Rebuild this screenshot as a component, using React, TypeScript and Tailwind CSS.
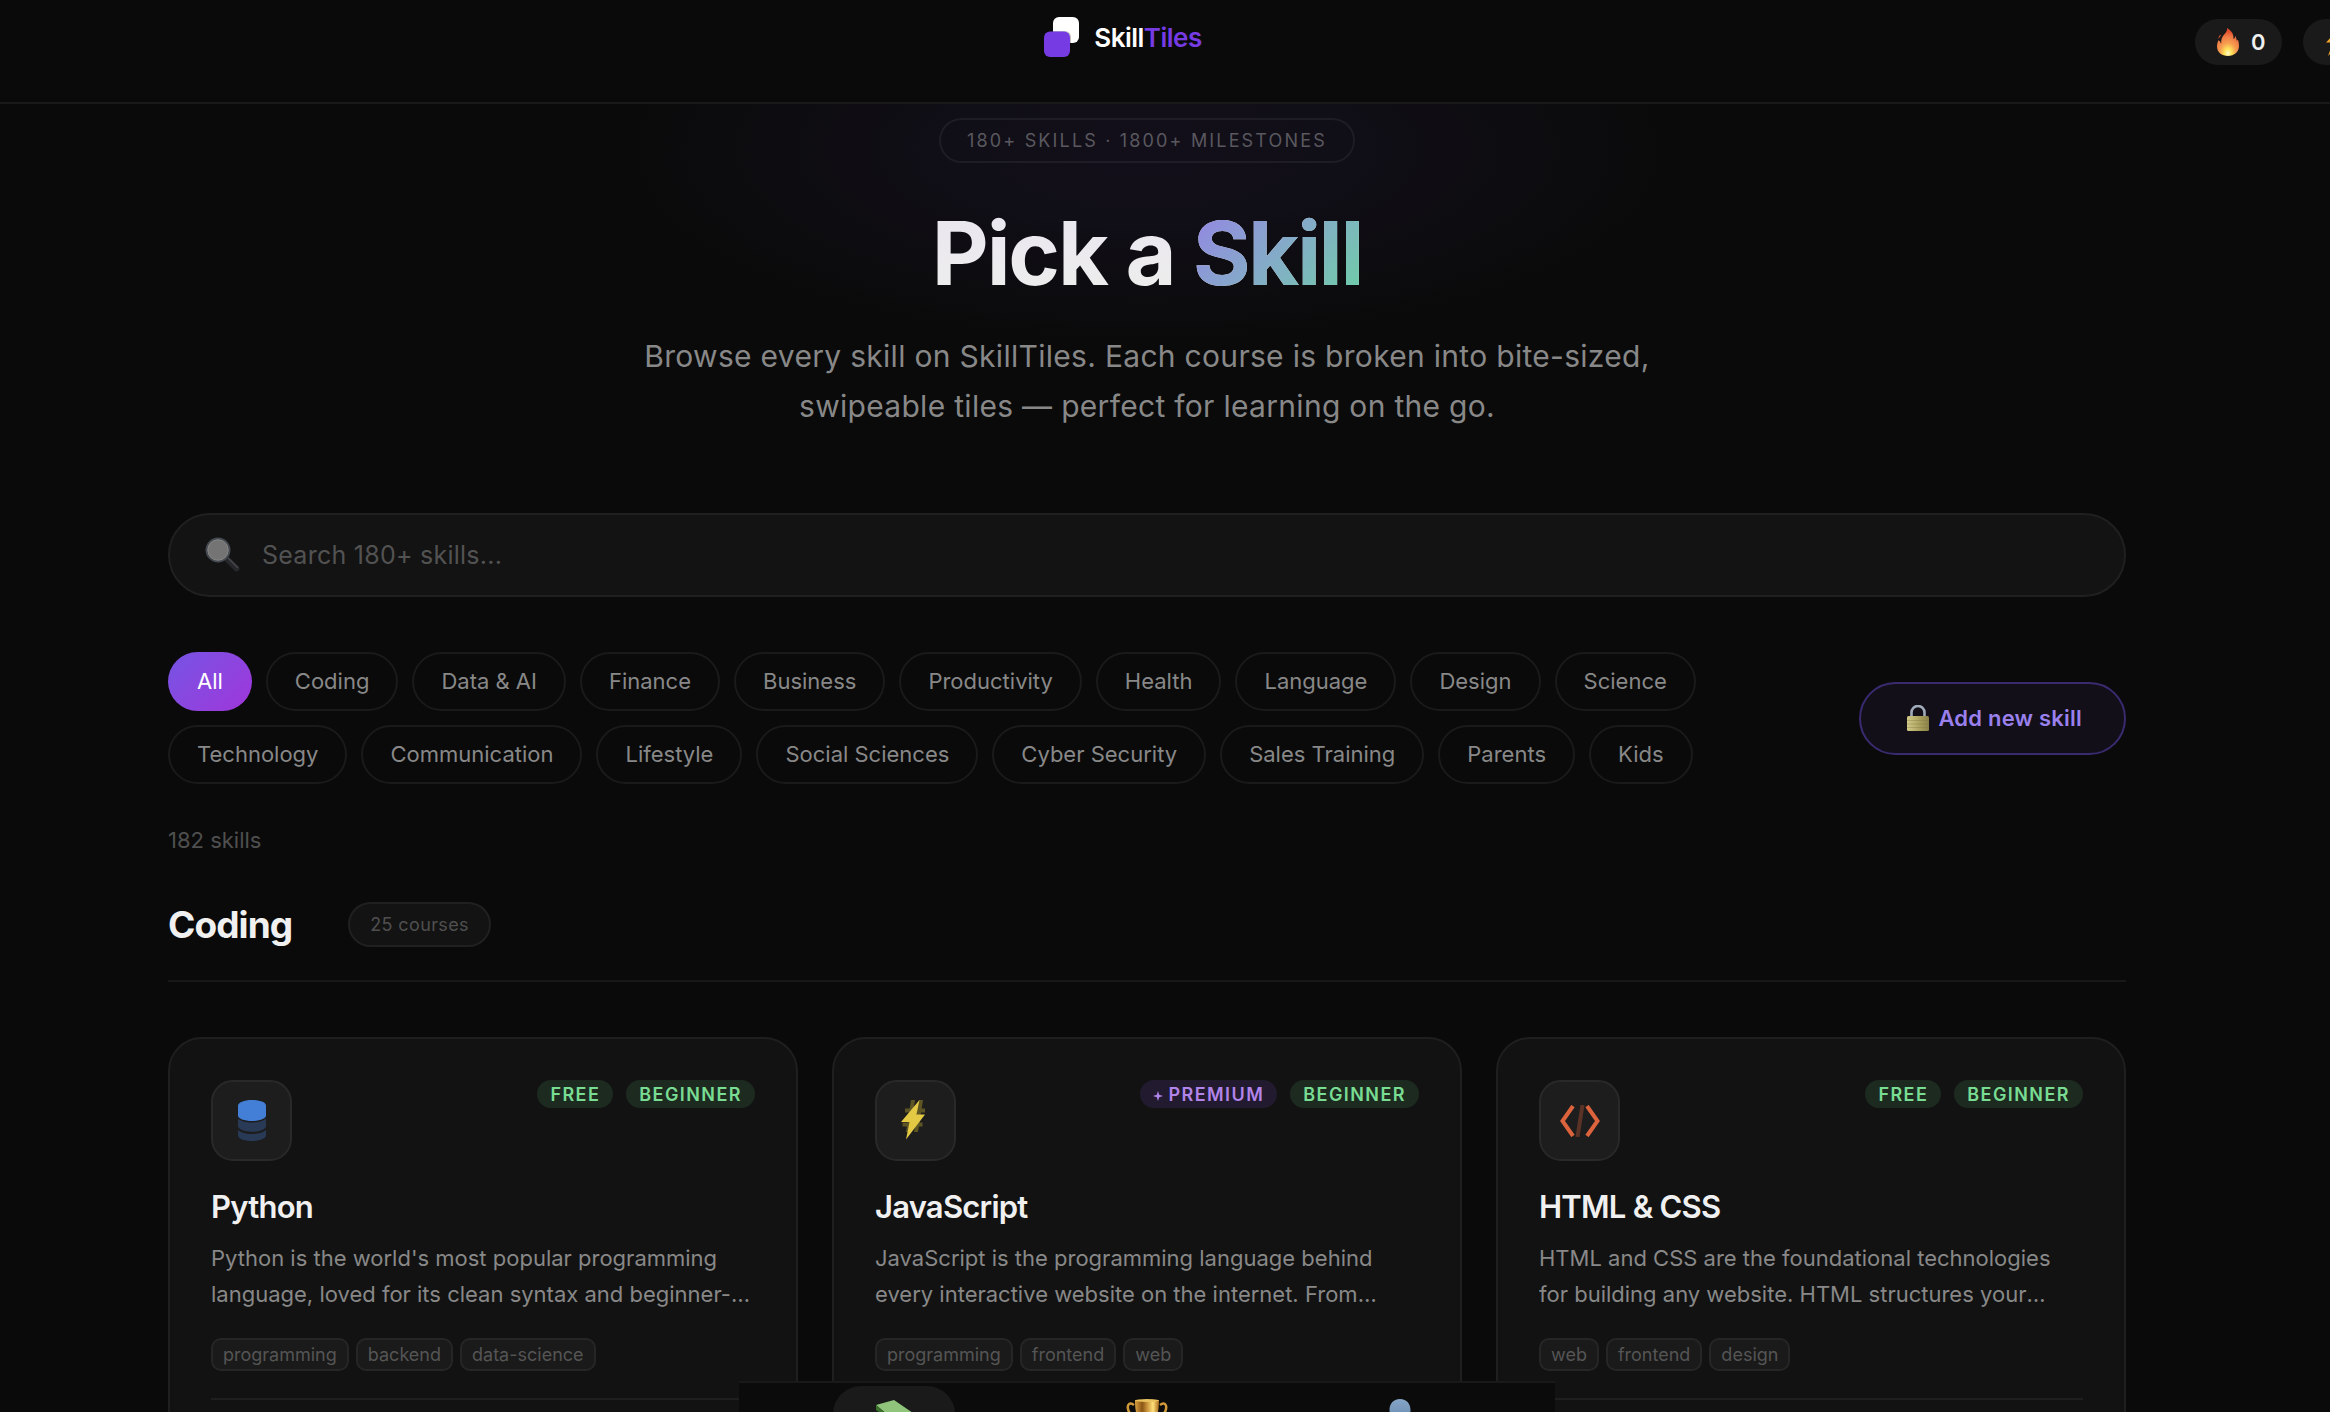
import React from "react";

const categories = [
  "All", "Coding", "Data & AI", "Finance", "Business", "Productivity", "Health", "Language", "Design", "Science",
  "Technology", "Communication", "Lifestyle", "Social Sciences", "Cyber Security", "Sales Training", "Parents", "Kids",
];

function Logo() {
  return (
    <svg width="36" height="40" viewBox="0 0 36 40" aria-hidden="true">
      <rect x="9" y="0" width="26" height="26" rx="6" fill="#fff" />
      <rect x="0" y="14" width="27" height="26" rx="6" fill="#0a0a0a" opacity=".25" />
      <rect x="0" y="14.5" width="26" height="25.5" rx="6" fill="#763be3" />
    </svg>
  );
}

function Flame() {
  return (
    <svg width="22" height="28" viewBox="0 0 22 28" aria-hidden="true">
      <defs>
        <radialGradient id="flame" cx=".5" cy=".9" r=".8">
          <stop offset="0" stopColor="#fffbd0" />
          <stop offset=".2" stopColor="#ffe35a" />
          <stop offset=".45" stopColor="#f7a050" />
          <stop offset=".75" stopColor="#ee7a45" />
          <stop offset="1" stopColor="#dd4a2c" />
        </radialGradient>
      </defs>
      <path d="M10.200 0c4.800 3.300 6.800 6.600 6.200 11 1.300-.6 1.900-1.700 1.900-3.300.9 1.800 1.300 3.300 1.400 5 .5-.2.900-.5 1.300-.9.7 2 1 4 1 6C22 24 17.200 28 11 28S0 24.200 0 18.500c0-2.600.6-4.600 1.600-6.500.4.8.9 1.300 1.600 1.600.1 1 .4 1.700 1 2.200C3.900 11.500 5 8.700 7.600 6 9.200 4.300 10.200 2.400 10.200 0z" fill="url(#flame)" />
      <path d="M3.600 6.500C2 7.800 1.300 9.400 1.700 11c.5-1.500 1.400-2.400 2-3z" fill="#e2552f" />
    </svg>
  );
}

function Bolt() {
  return (
    <svg width="22" height="28" viewBox="0 0 22 28" aria-hidden="true">
      <path d="M15 0 1 14.500h7L3 28l17-16.500h-8z" fill="#f3a32c" />
    </svg>
  );
}

function Magnifier() {
  return (
    <svg width="36" height="36" viewBox="0 0 36 36" aria-hidden="true">
      <path d="m22.500 22.500 9 9" stroke="#25272a" strokeWidth="6" strokeLinecap="round" />
      <path d="m23.500 21.500 9 9" stroke="#4a4c52" strokeWidth="1.200" strokeLinecap="round" />
      <circle cx="13" cy="13" r="11.500" fill="#747474" stroke="#454a50" strokeWidth="2" />
      <circle cx="13" cy="13" r="10.200" fill="none" stroke="#8a8a8a" strokeWidth=".8" />
    </svg>
  );
}

function Lock() {
  return (
    <svg width="22" height="26" viewBox="0 0 22 26" aria-hidden="true">
      <defs>
        <linearGradient id="lock" x1="0" x2="1">
          <stop offset="0" stopColor="#d3cb88" />
          <stop offset=".6" stopColor="#a89f5c" />
          <stop offset="1" stopColor="#8a8148" />
        </linearGradient>
      </defs>
      <path d="M4.500 12V7.500a6.500 6.500 0 0 1 13 0V12" fill="none" stroke="#9fabb9" strokeWidth="2.600" />
      <rect x="0" y="11" width="22" height="15" rx="1.500" fill="url(#lock)" />
      <path d="M0 15.500h22M0 19h22M0 22.500h22" stroke="#7d7644" strokeWidth=".6" opacity=".6" />
    </svg>
  );
}

function DatabaseIcon() {
  return (
    <svg width="30" height="42" viewBox="0 0 30 42" aria-hidden="true">
      <path d="M1 5.500C1 2.500 7 0 15 0s14 2.500 14 5.500v10C29 18.500 23 21 15 21S1 18.500 1 15.500z" fill="#437fd6" />
      <path d="M1 18.500c2.500 2.500 8 4 14 4s11.500-1.500 14-4V26c0 3-6 5.700-14 5.700S1 29 1 26z" fill="#293a57" />
      <path d="M1 30c2.500 2.500 8 4 14 4s11.500-1.500 14-4v5.500c0 3-6 5.500-14 5.500S1 38.500 1 35.500z" fill="#293a57" />
    </svg>
  );
}

function LightningIcon() {
  return (
    <svg width="30" height="42" viewBox="0 0 30 42" aria-hidden="true">
      <path d="M10 0h4l-5 32H5zM18 0h4l-5 32h-4zM4 8.500h20v4H4zM1.500 22.500h20v4h-20z" fill="#665c26" opacity=".9" />
      <path d="M18.500 0 0 22h8.500L5 39.500 24 14.500h-8.500z" fill="#e3c944" />
    </svg>
  );
}

function CodeIcon() {
  return (
    <svg width="40" height="32" viewBox="0 0 40 32" fill="none" aria-hidden="true">
      <path d="m22.500 0-5 32" stroke="#5b3226" strokeWidth="4" />
      <path d="M13 1 2.500 16 13 31M27 1l10.500 15L27 31" stroke="#dd633c" strokeWidth="4" />
    </svg>
  );
}

function Books() {
  return (
    <svg width="38" height="38" viewBox="0 0 38 38" aria-hidden="true">
      <path d="m1 5 18-5 19 13-18 8z" fill="#8fc47a" />
      <path d="M1 5v5l19 14v-3z" fill="#39702c" />
      <path d="m20 21 18-8v5l-18 8z" fill="#e8e8e0" />
      <path d="m1 14 19 13 18-8v6l-18 8L1 20z" fill="#3c7fc4" />
      <path d="m1 23 19 12 18-8v5l-18 6L1 28z" fill="#c44a3c" />
    </svg>
  );
}

function Trophy() {
  return (
    <svg width="42" height="40" viewBox="0 0 42 40" aria-hidden="true">
      <defs>
        <linearGradient id="trophy" x1="0" x2="1">
          <stop offset="0" stopColor="#d9a040" />
          <stop offset=".3" stopColor="#8a5516" />
          <stop offset=".5" stopColor="#c8913a" />
          <stop offset=".75" stopColor="#ffe07a" />
          <stop offset="1" stopColor="#a8681c" />
        </linearGradient>
      </defs>
      <path d="M8 6C4 3 1 5 2 10s6 9 11 9M34 6c4-3 7-1 6 4s-6 9-11 9" fill="none" stroke="#d09a3a" strokeWidth="2.500" />
      <path d="M9 1h24c0 12-2 21-9 24v7h6v7H12v-7h6v-7C11 22 9 13 9 1z" fill="url(#trophy)" />
      <ellipse cx="21" cy="1.500" rx="12" ry="1.500" fill="#e9c25e" />
    </svg>
  );
}

function Person() {
  return (
    <svg width="42" height="40" viewBox="0 0 42 40" aria-hidden="true">
      <defs>
        <linearGradient id="person" x1="0" x2="0" y1="0" y2="1">
          <stop offset="0" stopColor="#86a5c8" />
          <stop offset="1" stopColor="#4f7199" />
        </linearGradient>
      </defs>
      <path d="M21 0c7 0 10.500 5 10.500 11S27 22 21 22s-10.500-5-10.500-11S14 0 21 0zM2 40c0-10 8-15 19-15s19 5 19 15z" fill="url(#person)" />
    </svg>
  );
}

type Course = { name: string; premium?: boolean; text: string; tags: string[]; icon: React.ReactNode };

const courses: Course[] = [
  {
    name: "Python",
    text: "Python is the world's most popular programming language, loved for its clean syntax and beginner-friendly approach to software development.",
    tags: ["programming", "backend", "data-science"],
    icon: <DatabaseIcon />,
  },
  {
    name: "JavaScript",
    premium: true,
    text: "JavaScript is the programming language behind every interactive website on the internet. From animations to full applications, it runs everywhere.",
    tags: ["programming", "frontend", "web"],
    icon: <LightningIcon />,
  },
  {
    name: "HTML & CSS",
    text: "HTML and CSS are the foundational technologies for building any website. HTML structures your content while CSS controls presentation.",
    tags: ["web", "frontend", "design"],
    icon: <CodeIcon />,
  },
];

function CourseCard({ course }: { course: Course }) {
  const badge = "flex h-7 items-center rounded-full px-[13px] text-[18px] font-semibold tracking-[0.08em]";
  return (
    <article className="rounded-[34px] border-2 border-[#1f1f1f] bg-[#121212] p-[41px]">
      <div className="flex items-start justify-between">
        <div className="flex size-[81px] items-center justify-center rounded-[22px] border-2 border-[#292929] bg-[#1d1d1d]">
          {course.icon}
        </div>
        <div className="flex gap-[13px]">
          {course.premium ? (
            <span className={badge + " bg-[#221a2e] text-[#b184ea]"}>
              <svg width="10" height="10" viewBox="0 0 10 10" className="mt-1 mr-[6px]" aria-hidden="true">
                <path d="M5 0 6.200 3.800 10 5 6.200 6.200 5 10 3.800 6.200 0 5l3.800-1.200z" fill="currentColor" />
              </svg>
              PREMIUM
            </span>
          ) : (
            <span className={badge + " bg-[#1d2a20] text-[#79dc93]"}>FREE</span>
          )}
          <span className={badge + " bg-[#1d2a20] text-[#79dc93]"}>BEGINNER</span>
        </div>
      </div>
      <h3 className="mt-[26px] text-[31px] leading-10 font-semibold tracking-tight text-[#f0f0f0]">{course.name}</h3>
      <p className="mt-[13px] line-clamp-2 text-[22px] leading-9 text-[#888]">{course.text}</p>
      <ul className="mt-[26px] flex gap-[7px]">
        {course.tags.map((t) => (
          <li key={t} className="flex h-[33px] items-center rounded-[10px] border-2 border-[#262626] bg-[#1a1a1a] px-[10px] text-[18px] text-[#555]">
            {t}
          </li>
        ))}
      </ul>
      <hr className="mt-[27px] border-t-2 border-[#1f1f1f]" />
    </article>
  );
}

function Stat({ icon, label }: { icon: React.ReactNode; label: string }) {
  return (
    <div className="flex h-[46px] shrink-0 items-center gap-3 rounded-full bg-[#1a1a1a] pr-[17px] pl-[22px] text-[22px] font-semibold text-[#f0f0f0]">
      {icon}
      <span aria-label={label}>0</span>
    </div>
  );
}

export default function App() {
  return (
    <div className="h-screen overflow-hidden bg-[#0a0a0a] font-['Inter',sans-serif] text-[#f0f0f0]">
      <header className="relative z-10 h-[104px] border-b-2 border-[#191919] bg-[#0a0a0a]">
        <div className="flex items-start pr-[84px]">
          <div className="flex-1" />
          <a href="#" className="mt-[17px] flex h-10 items-center gap-[14px] text-[26px] font-semibold tracking-[-0.02em] text-white">
            <Logo />
            <span>
              Skill<span className="text-[#763be3]">Tiles</span>
            </span>
          </a>
          <div className="flex flex-1 justify-end">
            <div className="mt-[19px] -mr-[145px] flex gap-[21px]">
              <Stat icon={<Flame />} label="Streak" />
              <Stat icon={<Bolt />} label="Points" />
            </div>
          </div>
        </div>
      </header>

      <main className="relative pr-[204px] pl-[168px]">
        <div className="pointer-events-none absolute inset-x-0 -top-[150px] h-[390px] pr-9">
          <div className="mx-auto h-full w-[1060px] bg-[radial-gradient(closest-side,#120f1a,#100e16_40%,#0a0a0a)]" />
        </div>

        <section className="relative flex flex-col items-center pt-[14px] text-center">
          <p className="flex h-[45px] items-center rounded-full border-2 border-[#1e1c24] px-[26px] text-[18px] tracking-[0.12em] text-[#5a585f]">
            180+ SKILLS · 1800+ MILESTONES
          </p>
          <h1 className="mt-10 bg-linear-to-b from-[#e9e6f0] to-[#eeeeec] bg-clip-text text-[88px] leading-[100px] font-bold tracking-tight text-transparent">
            Pick a <span className="bg-linear-135 from-[#9480e6] to-[#6ad0a2] bg-clip-text">Skill</span>
          </h1>
          <p className="mt-7 max-w-[1060px] text-[30px] leading-[50px] tracking-[0.01em] text-[#888]">
            Browse every skill on SkillTiles. Each course is broken into bite-sized, swipeable tiles — perfect for learning on the go.
          </p>
        </section>

        <label className="relative mt-[82px] flex h-[84px] items-center gap-[21px] rounded-full border-2 border-[#202020] bg-[#131313] pl-[35px]">
          <Magnifier />
          <input
            type="search"
            aria-label="Search skills"
            placeholder="Search 180+ skills..."
            className="h-full flex-1 bg-transparent text-[25px] tracking-[0.01em] outline-none placeholder:text-[#525252]"
          />
        </label>

        <div className="mt-[55px] flex items-center gap-7">
          <div className="flex flex-1 flex-wrap gap-[14px]">
            {categories.map((c, i) => (
              <button
                key={c}
                className={
                  "h-[59px] rounded-full text-[22px] " +
                  (i === 0
                    ? "bg-linear-135 from-[#7453e4] to-[#9f34da] px-[29px] text-white"
                    : "border-2 border-[#1a1a1a] px-[27px] text-[#888]")
                }
              >
                {c}
              </button>
            ))}
          </div>
          <button className="flex h-[73px] shrink-0 items-center gap-[9px] rounded-full border-2 border-[#3a2a70] bg-[#120f19] pr-[42px] pl-[46px] text-[22px] font-semibold tracking-[0.01em] text-[#9a80ec]">
            <Lock />
            Add new skill
          </button>
        </div>

        <p className="mt-10 text-[22px] leading-8 text-[#4f4f4f]">182 skills</p>

        <section>
          <div className="mt-[46px] flex items-center gap-14 border-b-2 border-[#181818] pb-[33px]">
            <h2 className="text-[37px] leading-[45px] font-bold tracking-tight">Coding</h2>
            <span className="flex h-[45px] items-center rounded-full border-2 border-[#202020] bg-[#131313] px-5 text-[18px] tracking-[0.02em] text-[#4f4f4f]">
              25 courses
            </span>
          </div>
          <div className="mt-[55px] grid grid-cols-3 gap-[34px]">
            {courses.map((c) => (
              <CourseCard key={c.name} course={c} />
            ))}
          </div>
        </section>
      </main>

      <div className="pointer-events-none fixed inset-x-0 bottom-0 h-[31px] overflow-hidden pr-9">
        <nav className="pointer-events-auto mx-auto flex h-32 w-[816px] justify-around border-t-2 border-[#191919] bg-[#0b0b0b] px-7 pt-[3px]">
          <a href="#" aria-label="Skills" className="flex h-24 w-[122px] justify-center rounded-[28px] bg-[#1a1a1a] pt-[14px]">
            <Books />
          </a>
          <a href="#" aria-label="Achievements" className="flex h-24 w-[122px] justify-center pt-[13px]">
            <Trophy />
          </a>
          <a href="#" aria-label="Profile" className="flex h-24 w-[122px] justify-center pt-[13px]">
            <Person />
          </a>
        </nav>
      </div>
    </div>
  );
}
